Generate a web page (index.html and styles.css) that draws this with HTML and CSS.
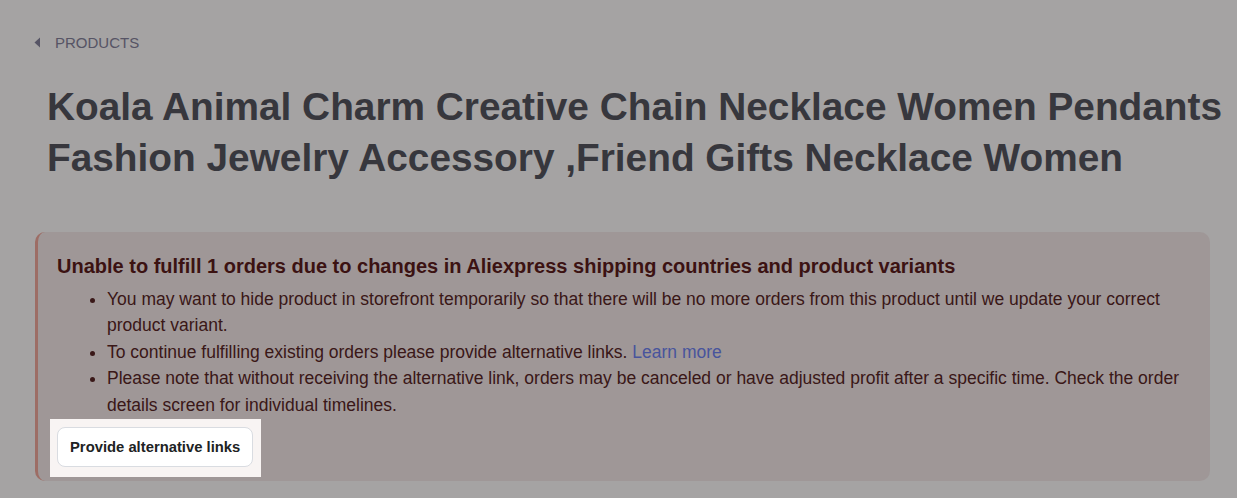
FILE: index.html
```html
<!DOCTYPE html>
<html lang="en">
<head>
<meta charset="utf-8">
<title>Koala Animal Charm Creative Chain Necklace</title>
<link rel="stylesheet" href="styles.css">
</head>
<body>
<main class="page">
  <nav class="breadcrumb">
    <a class="breadcrumb-link" href="#">
      <svg class="breadcrumb-arrow" width="6" height="11" viewBox="0 0 6 11" aria-hidden="true"><path d="M6 0.5 L0.5 5.5 L6 10.5 Z" fill="currentColor"/></svg>
      <span>PRODUCTS</span>
    </a>
  </nav>
  <h1 class="title">Koala Animal Charm Creative Chain Necklace Women Pendants Fashion Jewelry Accessory ,Friend Gifts Necklace Women</h1>
  <section class="banner">
    <h2 class="banner-heading">Unable to fulfill 1 orders due to changes in Aliexpress shipping countries and product variants</h2>
    <ul class="banner-list">
      <li>You may want to hide product in storefront temporarily so that there will be no more orders from this product until we update your correct product variant.</li>
      <li>To continue fulfilling existing orders please provide alternative links. <a class="link" href="#">Learn more</a></li>
      <li>Please note that without receiving the alternative link, orders may be canceled or have adjusted profit after a specific time. Check the order details screen for individual timelines.</li>
    </ul>
    <div class="spotlight">
      <button class="btn" type="button">Provide alternative links</button>
    </div>
  </section>
</main>
</body>
</html>
```

FILE: styles.css
```css
* { box-sizing: border-box; }

html, body {
  margin: 0;
  height: 100%;
}

body {
  background: #fdfafa;
  font-family: "Liberation Sans", Arial, sans-serif;
  overflow: hidden;
}

.page {
  padding: 33px 0 0 34px;
}

.breadcrumb {
  height: 20px;
  line-height: 20px;
}

.breadcrumb-link {
  display: inline-flex;
  align-items: center;
  gap: 15px;
  color: #85829b;
  font-size: 15px;
  text-decoration: none;
}

.breadcrumb-arrow {
  display: block;
  margin-top: -1px;
}

.title {
  margin: 28px 0 0 13px;
  font-size: 38.8px;
  line-height: 51px;
  font-weight: 700;
  color: #55555e;
}

.banner {
  margin: 49px 27px 0 1px;
  background: #f4e9e9;
  border-left: 3px solid #f2a89c;
  border-radius: 10px;
  padding: 20px 20px 14px 19px;
}

.banner-heading {
  margin: 0;
  font-size: 20px;
  line-height: 28px;
  font-weight: 700;
  color: #5c1c1c;
}

.banner-list {
  margin: 6px 0 0;
  padding-left: 50px;
  font-size: 17.5px;
  line-height: 26.4px;
  color: #5a2626;
}

.link {
  color: #6f82f0;
  text-decoration: none;
}

.spotlight {
  position: relative;
  z-index: 10;
  display: inline-block;
  margin-top: 9px;
}

.spotlight::before {
  content: "";
  position: absolute;
  top: -8px;
  left: -7px;
  right: -8px;
  bottom: -10px;
  z-index: -1;
  background: #f8f4f3;
  box-shadow: 0 0 0 3000px rgba(0, 0, 0, 0.35);
}

.btn {
  display: block;
  height: 40px;
  padding: 0 12px;
  background: #ffffff;
  border: 1px solid #d9dce1;
  border-radius: 8px;
  font-family: "Liberation Sans", Arial, sans-serif;
  font-size: 14.8px;
  font-weight: 700;
  color: #202223;
  cursor: pointer;
}
```
